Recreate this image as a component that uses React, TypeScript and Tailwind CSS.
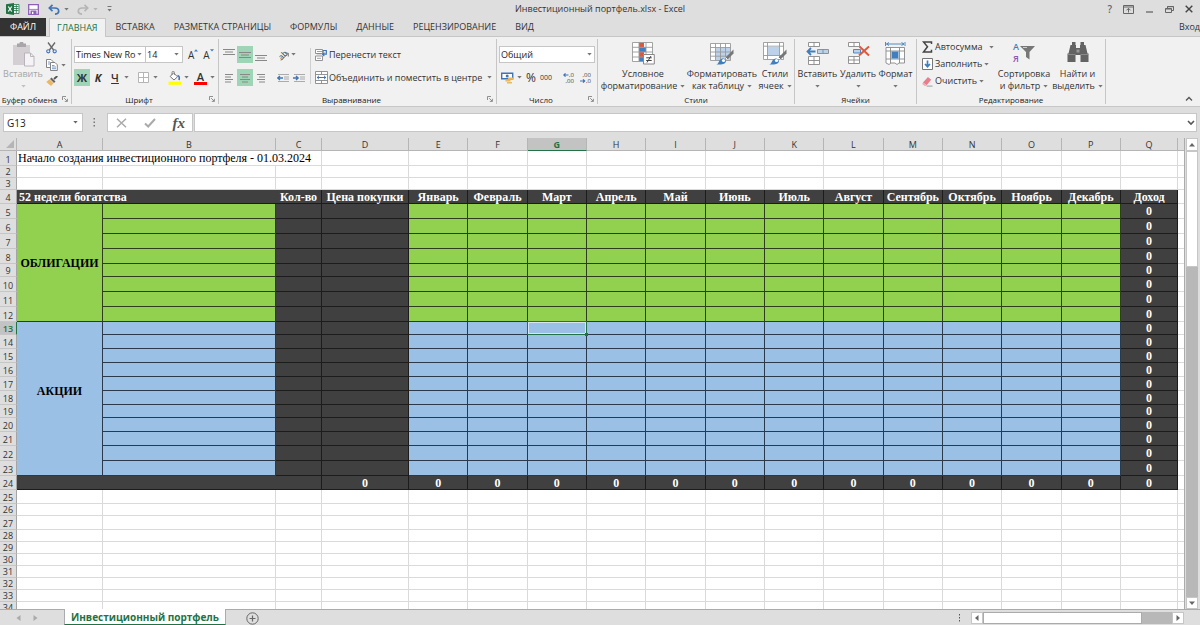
import React, { useState } from 'react';

const MONTHS = ['Январь', 'Февраль', 'Март', 'Апрель', 'Май', 'Июнь', 'Июль', 'Август', 'Сентябрь', 'Октябрь', 'Ноябрь', 'Декабрь'];
const COLUMNS = ['A', 'B', 'C', 'D', 'E', 'F', 'G', 'H', 'I', 'J', 'K', 'L', 'M', 'N', 'O', 'P', 'Q'];
const TABS = ['ВСТАВКА', 'РАЗМЕТКА СТРАНИЦЫ', 'ФОРМУЛЫ', 'ДАННЫЕ', 'РЕЦЕНЗИРОВАНИЕ', 'ВИД'];

const SHORT = 'h-3';
const MID = 'h-[13px]';
const TALL = 'h-[14px]';
const FULL = 'h-[15px]';

// heights of rows 1..34
const ROW_HEIGHTS = [
  FULL, SHORT, SHORT, TALL,
  FULL, FULL, FULL, FULL, MID, FULL, FULL, FULL,
  MID, TALL, TALL, TALL, TALL, TALL, MID, TALL, TALL, FULL, FULL,
  TALL, TALL, SHORT, TALL, SHORT, SHORT, SHORT, SHORT, SHORT, SHORT, SHORT,
];

type IconProps = { className?: string };

const Caret: React.FC<IconProps> = ({ className = 'text-[#777]' }) => (
  <svg width="5" height="3" viewBox="0 0 5 3" className={`shrink-0 ${className}`}><path d="M.3 0h4.4L2.5 2.6z" fill="currentColor" /></svg>
);

const Launcher = ({ label }: { label: string }) => (
  <button aria-label={label} className="absolute right-[3px] bottom-[2px]">
    <svg width="6" height="6" viewBox="0 0 6 6" fill="none" stroke="#777" strokeWidth="0.8"><path d="M.5 4V.5H4M2.2 2.2l3 3M5.4 2.8v2.6H2.8" /></svg>
  </button>
);

const Group = ({ title, className, launcher, children }: { title: string; className: string; launcher?: boolean; children: React.ReactNode }) => (
  <section className={`relative flex flex-col shrink-0 border-r border-[#c6c6c6] my-[2px] ${className}`}>
    <div className="flex-1 flex">{children}</div>
    <div className="h-[11px] text-[8px] leading-[13px] text-center text-[#222]">{title}</div>
    {launcher && <Launcher label={`Параметры: ${title}`} />}
  </section>
);

const Rule = () => <span className="w-px h-[14px] bg-[#cfcfcf] shrink-0" />;

const BigButton = ({ icon, lines, className, caretBelow }: { icon: React.ReactNode; lines: string[]; className: string; caretBelow?: boolean }) => (
  <button className={`flex flex-col items-center shrink-0 pt-[3px] whitespace-nowrap ${className}`}>
    <span className="h-[26px] flex items-start">{icon}</span>
    <span className="h-3 leading-3">{lines[0]}</span>
    {caretBelow ? (
      <span className="h-3 flex items-center"><Caret /></span>
    ) : (
      <span className="h-3 leading-3 flex items-center gap-[3px]">{lines[1]}<Caret /></span>
    )}
  </button>
);

const AlignLines = ({ rows, y = 3, label, active }: { rows: number[][]; y?: number; label: string; active?: boolean }) => (
  <button aria-label={label} className={`w-4 h-[17px] flex items-center justify-center shrink-0 ${active ? 'bg-[#9fd5b7]' : ''}`}>
    <svg width="12" height="16" viewBox="0 0 12 16" stroke="#888" strokeWidth="1">
      {rows.map(([from, to], i) => <path key={i} d={`M${from} ${y + i * 2.5}H${to}`} />)}
    </svg>
  </button>
);

const ExcelLogo = () => (
  <svg width="14" height="12" viewBox="0 0 14 12">
    <path d="M7 1.5h6v9H7z" fill="#fff" stroke="#217346" strokeWidth=".8" />
    <path d="M8 3.5h4.5M8 5.5h4.5M8 7.5h4.5M10.3 2v8" stroke="#217346" strokeWidth=".8" />
    <path d="M0 1.2 8 0v12L0 10.8z" fill="#217346" />
    <path d="m2.3 3.5 3.4 5M5.7 3.5l-3.4 5" stroke="#fff" strokeWidth="1.2" />
  </svg>
);

const SaveIcon = () => (
  <svg width="11" height="11" viewBox="0 0 11 11">
    <path d="M.7.7h9.6v9.6H.7z" fill="#fff" stroke="#8d5fb5" strokeWidth="1.3" />
    <path d="M2.5 6.5h6V10h-6z" fill="#8d5fb5" /><path d="M4 7.7h1.4V10H4z" fill="#fff" />
    <path d="M1 5.4h9" stroke="#8d5fb5" strokeWidth=".8" />
  </svg>
);

const UndoIcon = ({ className }: IconProps) => (
  <svg width="12" height="11" viewBox="0 0 12 11" fill="none" stroke="currentColor" strokeWidth="1.7" className={className}>
    <path d="M4.5.8 1.3 4l3.2 3.2M1.5 4h5.2c2.6 0 4 1.3 4 3.2S9 10 7 10.2" />
  </svg>
);

const PasteIcon = () => (
  <svg width="23" height="25" viewBox="0 0 23 25">
    <path d="M1 3h17v20H1z" fill="#d3cfd2" /><path d="M5 1.5h2.5a2 2 0 0 1 4 0H14V5H5z" fill="#a9a5a8" />
    <path d="M12.5 11h6l3.5 3.5V24h-9.5z" fill="#f6f3f7" stroke="#b9b4bc" /><path d="M18.5 11v3.5H22" fill="none" stroke="#b9b4bc" />
  </svg>
);

const ScissorsIcon = () => (
  <svg width="11" height="12" viewBox="0 0 11 12" fill="none">
    <path d="M2 .5 7.6 8M9 .5 3.4 8" stroke="#666" strokeWidth="1.3" />
    <circle cx="2.3" cy="9.3" r="1.6" stroke="#3f74b5" strokeWidth="1.1" /><circle cx="8.7" cy="9.3" r="1.6" stroke="#3f74b5" strokeWidth="1.1" />
  </svg>
);

const CopyIcon = () => (
  <svg width="12" height="12" viewBox="0 0 12 12" fill="#fff" stroke="#777" strokeWidth=".9">
    <path d="M.5.5H5l2 2v6H.5z" /><path d="M4.5 3.5H9l2.3 2.3v5.7H4.5z" />
    <path d="M2 3h2M2 5h2M6 6.5h2.5M6 8h4M6 9.7h4" stroke="#3f74b5" strokeWidth=".7" />
  </svg>
);

const BrushIcon = () => (
  <svg width="12" height="10" viewBox="0 0 12 10">
    <path d="M11.3 0 8 3" stroke="#555" strokeWidth="1.8" /><path d="m5.5 1.5 4 4L8 7 4 3z" fill="#666" />
    <path d="m3.5 3.3 4 4L5 10 .3 6z" fill="#eab765" />
  </svg>
);

const BordersIcon = () => (
  <svg width="11" height="11" viewBox="0 0 11 11" fill="#fff" stroke="#b5b5b5"><path d="M.5.5h10v10H.5zM5.5.5v10M.5 5.5h10" /></svg>
);

const FillIcon = () => (
  <svg width="13" height="14" viewBox="0 0 13 14">
    <path d="m5.5 1.8 4 4L6 9 2.2 5.5z" fill="#fff" stroke="#777" /><path d="M4 4V1.500a1.200 1.200 0 0 1 2.400 0V4" fill="none" stroke="#777" strokeWidth=".8" />
    <path d="M9.500 4.500c1.800.5 2.200 2 1.500 4.500" fill="none" stroke="#3f74b5" strokeWidth="1.600" />
    <path d="M.5 10.800H13v3H.5z" fill="#ffff00" />
  </svg>
);

const OrientationIcon = () => (
  <span className="relative w-3 h-3 flex items-center justify-center">
    <span className="text-[8px] leading-none -rotate-45">ab</span>
    <svg width="12" height="12" viewBox="0 0 12 12" className="absolute inset-0" fill="none" stroke="#777"><path d="m4 11.5 7-7M11.300 7.500V4.200H8" /></svg>
  </span>
);

const IndentIcon = ({ flip }: { flip?: boolean }) => (
  <svg width="12" height="10" viewBox="0 0 12 10" fill="none" stroke="#999">
    <path d="M1 1.500h11M7 4h5M7 6h5M1 8.500h11" strokeWidth=".8" />
    <path d={flip ? 'M0 5h5M3 3l2.200 2L3 7' : 'M6 5H.8M3 3 .8 5 3 7'} stroke="#3f74b5" strokeWidth="1.300" />
  </svg>
);

const WrapIcon = () => (
  <svg width="12" height="12" viewBox="0 0 12 12" fill="none" stroke="#888">
    <path d="M.5.5h7v4h-7zM.5 7h7v4.500h-7z" fill="#fff" strokeWidth=".9" /><path d="M2 2.500h7M2 9.300h4M2 4.800h4" strokeWidth=".8" />
    <path d="M8 1.500h3.300v3.700H7.500M9.300 3.500 7.500 5.200l1.800 1.800" stroke="#3f74b5" strokeWidth="1.200" />
  </svg>
);

const MergeIcon = () => (
  <svg width="13" height="13" viewBox="0 0 13 13" fill="#fff" stroke="#888">
    <path d="M.5.5h12v12H.5zM.5 3.500h12M.5 9.500h12M6.500.5v3M6.500 9.500v3" strokeWidth=".9" />
    <path d="M2 6.500h9M4 4.800 2.200 6.500 4 8.200M9 4.800l1.800 1.700L9 8.200" fill="none" stroke="#3f74b5" />
  </svg>
);

const MoneyIcon = () => (
  <svg width="13" height="12" viewBox="0 0 13 12">
    <path d="M.7 1.200h11v5.500H.7z" fill="#fff" stroke="#3f74b5" strokeWidth="1.400" /><circle cx="6.200" cy="4" r="1.500" fill="#3f74b5" />
    <path d="M7 5.500h5.500v2H7zM4.500 8h5v1.500h-5zM6 10h5v1.500H6z" fill="#eab765" />
  </svg>
);

const DecimalIcon = ({ grow }: { grow?: boolean }) => (
  <span className="relative block w-[11px] h-3 text-[6px] leading-[6px] text-[#444]">
    <span className="block text-right">{grow ? ',0' : ',00'}</span>
    <span className="block text-right">{grow ? ',00' : ',0'}</span>
    <svg width="11" height="12" viewBox="0 0 11 12" className="absolute inset-0" fill="none" stroke="#3f74b5" strokeWidth="1.200">
      <path d={grow ? 'M5.500 3H.8M2.500 1.300.8 3l1.700 1.700' : 'M0 9h4.600M3 7.300 4.700 9 3 10.700'} />
    </svg>
  </span>
);

const ConditionalIcon = () => (
  <svg width="23" height="23" viewBox="0 0 23 23">
    <path d="M.5.5h20v19H.5z" fill="#fff" /><path d="M7 .5h5v4.800H7zM7 10h5v5H7z" fill="#e0563a" /><path d="M7 5.300h7V10H7zM7 15h4v4.500H7z" fill="#3f7fc1" />
    <path d="M.5.5h20v19H.5zM7 .5v19M14 .5v19M.5 5.300h20M.5 10h20M.5 15h20" fill="none" stroke="#999" strokeWidth=".9" />
    <path d="M11.500 12.500h10.800V22H11.500z" fill="#fff" stroke="#888" /><path d="M14.200 15.800h5.500M14.200 18.500h5.500M19 14l-4 6.500" stroke="#444" />
  </svg>
);

const BrushOverlay = () => (
  <>
    <path d="M23.500 7.500v4l-6 6-2-2z" fill="#777" /><path d="m15.500 15.500 2 2" stroke="#fff" />
    <path d="M6 22.500c3 0 2.500-5.500 6.500-6 2 0 4 1.500 3.300 3.500-.8 2.300-5 2.800-9.800 2.500z" fill="#3f7fc1" />
    <circle cx="13.500" cy="18.500" r="1.600" fill="#fff" />
  </>
);

const TableStyleIcon = () => (
  <svg width="25" height="24" viewBox="0 0 25 24">
    <path d="M.5 1.500h20v17H.5z" fill="#fff" /><path d="M6 6h14.500v12.500H6z" fill="#bcd1ea" />
    <path d="M.5 1.500h20v17H.5zM5.500 1.500v17M10.500 1.500v17M15.500 1.500v17M.5 5.500h20M.5 10h20M.5 14.200h20" fill="none" stroke="#999" strokeWidth=".9" />
    <BrushOverlay />
  </svg>
);

const CellStyleIcon = () => (
  <svg width="25" height="24" viewBox="0 0 25 24">
    <path d="M.5.5h20v17H.5z" fill="#fff" /><path d="M.5.5h20v17H.5zM4.500.5v17M16.500.5v17M.5 4.200h20M.5 13.500h20" fill="none" stroke="#999" strokeWidth=".9" />
    <path d="M5 4.700h11V13H5z" fill="#bcd1ea" /><BrushOverlay />
  </svg>
);

const InsertCellsIcon = () => (
  <svg width="23" height="23" viewBox="0 0 23 23" fill="#fff" stroke="#888" strokeWidth=".9">
    <path d="M2.500.5h11v4h-11zM8 .5v4M2.500 14.500h11v8h-11zM8 14.500v8M2.500 18.500h11" />
    <path d="M11.500 7.500h11v4h-11zM17 7.500v4" fill="#bcd1ea" /><path d="M9.500 9.500h-8M5 6 1.500 9.500 5 13" fill="none" stroke="#3f7fc1" strokeWidth="1.800" />
  </svg>
);

const DeleteCellsIcon = () => (
  <svg width="23" height="23" viewBox="0 0 23 23" fill="#fff" stroke="#888" strokeWidth=".9">
    <path d="M1.500.5h11v4h-11zM7 .5v4M1.500 14.500h11v7h-11zM7 14.500v7M1.500 18h11" /><path d="M6.500 7.500h7V11h-7z" fill="#bcd1ea" stroke="#3f7fc1" />
    <path d="m12.500 4.500 9.500 9M22 4.500l-10 9" stroke="#e0563a" strokeWidth="1.900" />
  </svg>
);

const FormatCellsIcon = () => (
  <svg width="21" height="24" viewBox="0 0 21 24" fill="#fff" stroke="#888" strokeWidth=".9">
    <path d="M1 5.500h18.500V21H14l-2 1.500L10 21H6l-2 1.500L1 21zM5.500 5.500V21M14.500 5.500V21M1 9h18.500M1 17h18.500" /><path d="M6.500 9.500h7v7h-7z" fill="#3f7fc1" stroke="none" />
    <path d="M.5 0v4M20 0v4M1.500 2H19M4 .5 1.500 2 4 3.500M16.500.5 19 2l-2.500 1.500" fill="none" stroke="#3f7fc1" />
  </svg>
);

const SigmaIcon = () => (
  <svg width="11" height="12" viewBox="0 0 11 12" fill="none" stroke="#444" strokeWidth="1.500"><path d="M9.500 3V1h-8l4 4.800L1.500 11h8V8.800" /></svg>
);

const FillDownIcon = () => (
  <svg width="11" height="12" viewBox="0 0 11 12" fill="#fff" stroke="#777"><path d="M.5.5h10v11H.5z" /><path d="M5.500 2.500v6M3 6l2.500 2.700L8 6" fill="none" stroke="#3f7fc1" strokeWidth="1.700" /></svg>
);

const EraserIcon = () => (
  <svg width="11" height="11" viewBox="0 0 12 11"><path d="m6.500.5 3.500 3-5 6-4-3z" fill="#e97d8d" /><path d="m1 6.500 4 3-.8 1H2.800L.3 8.200z" fill="#f2abb5" /><path d="M5 10.500h6.500" stroke="#888" strokeWidth=".9" /></svg>
);

const SortFilterIcon = () => (
  <span className="flex items-center h-[22px]">
    <span className="flex flex-col text-[9px] leading-[12px] font-semibold"><span className="text-[#3f7fc1]">А</span><span className="text-[#8a5ab0]">Я</span></span>
    <svg width="15" height="14" viewBox="0 0 15 14" className="ml-px"><path d="M0 0h15L9.500 6v7.500L6 11V6z" fill="#777" /><path d="M3 1.500h4" stroke="#ccc" /></svg>
  </span>
);

const BinocularsIcon = () => (
  <svg width="22" height="20" viewBox="0 0 22 20" fill="#636363">
    <path d="M5 0h3.500v3H5zM13.500 0H17v3h-3.500zM3.500 3H9v3h4V3h5.500l2 8.500h1V20h-8v-7h-5v7h-8v-8.500h1z" />
    <path d="M9.500 7.500h3v3h-3z" fill="#999" /><path d="M.5 12.500h8M13.500 12.500h8" stroke="#999" strokeWidth=".7" />
  </svg>
);

const TitleBar = () => (
  <header className="flex h-[18px] items-center px-[6px]">
    <div className="flex-1 flex items-center">
      <ExcelLogo />
      <button aria-label="Сохранить" className="ml-2"><SaveIcon /></button>
      <button aria-label="Отменить" className="ml-[9px] text-[#3f74b5]"><UndoIcon /></button>
      <Caret className="text-[#777] ml-1" />
      <button aria-label="Повторить" className="ml-2 text-[#b5b5b5]"><UndoIcon className="-scale-x-100" /></button>
      <Caret className="text-[#b5b5b5] ml-1" />
      <button aria-label="Настройка панели" className="ml-[9px]">
        <svg width="5" height="6" viewBox="0 0 5 6" fill="#777"><path d="M.5 0h4v1h-4zM.5 3h4l-2 2.500z" /></svg>
      </button>
    </div>
    <h1>Инвестиционный портфель.xlsx - Excel</h1>
    <div className="flex-1 flex items-center justify-end gap-[11px] text-[#666]">
      <button aria-label="Справка" className="text-[10px] font-semibold">?</button>
      <button aria-label="Параметры ленты">
        <svg width="11" height="9" viewBox="0 0 11 9" fill="none" stroke="currentColor"><path d="M.5.5h10v8H.5zM.5 2h10M5.500 7.500v-4M3.500 5.300l2-2 2 2" /></svg>
      </button>
      <button aria-label="Свернуть"><svg width="9" height="9" viewBox="0 0 9 9"><path d="M1 7h7" stroke="currentColor" strokeWidth="1.300" /></svg></button>
      <button aria-label="Восстановить">
        <svg width="9" height="9" viewBox="0 0 9 9" fill="none" stroke="currentColor"><path d="M.5 3.500h6v4h-6zM.5 4h6M2.500 3.500v-2h6v4h-2M2.500 1.700h6" /></svg>
      </button>
      <button aria-label="Закрыть" className="mr-[1px]"><svg width="8" height="8" viewBox="0 0 8 8"><path d="m.7.7 6.600 6.600M7.300.7.7 7.300" stroke="#444" strokeWidth="1.400" /></svg></button>
    </div>
  </header>
);

const TabRow = () => (
  <nav className="flex h-[19px] items-stretch border-b border-[#c6c6c6] whitespace-nowrap">
    <button className="w-[46px] bg-[#333] text-white">ФАЙЛ</button>
    <button className="ml-[3px] mr-px -mb-px px-[7px] border border-b-0 border-[#c6c6c6] bg-[#f1f1f1] text-[#217346]">ГЛАВНАЯ</button>
    {TABS.map((tab) => <button key={tab} className="px-[9px] mr-px">{tab}</button>)}
    <a href="#login" className="ml-auto flex items-center">Вход</a>
  </nav>
);

const FontGroup = () => (
  <div className="flex flex-col gap-[6px] pl-[2px] pt-[7px]">
    <div className="flex items-center">
      <div className="relative w-[72px] h-[17px]">
        <select aria-label="Шрифт" className="appearance-none w-full h-full border border-[#c6c6c6] bg-white pl-[1px] text-[#222]"><option>Times New Ro</option></select>
        <Caret className="absolute right-1 top-[7px] text-[#777] pointer-events-none" />
      </div>
      <div className="relative w-[38px] h-[17px] -ml-px">
        <select aria-label="Размер шрифта" className="appearance-none w-full h-full border border-[#c6c6c6] bg-white pl-[1px] text-[#222]"><option>14</option></select>
        <Caret className="absolute right-1 top-[7px] text-[#777] pointer-events-none" />
      </div>
      <button aria-label="Увеличить размер шрифта" className="ml-[5px] flex items-start text-[10px] leading-3">A<svg width="4" height="3" viewBox="0 0 4 3"><path d="M0 2.500 2 .3l2 2.200z" fill="#3f7fc1" /></svg></button>
      <button aria-label="Уменьшить размер шрифта" className="ml-[5px] flex items-start text-[10px] leading-3">A<svg width="4" height="3" viewBox="0 0 4 3"><path d="M0 .3 2 2.500 4 .3z" fill="#3f7fc1" /></svg></button>
    </div>
    <div className="flex items-center h-[17px]">
      <button className="w-4 h-[17px] bg-[#9fd5b7] text-[11px] font-bold">Ж</button>
      <button className="w-4 text-[11px] font-bold italic">К</button>
      <button className="w-[18px] text-[11px] font-semibold underline">Ч</button>
      <Caret />
      <span className="ml-[5px]"><Rule /></span>
      <button aria-label="Границы" className="ml-1"><BordersIcon /></button>
      <Caret className="ml-1 text-[#777]" />
      <span className="ml-[5px]"><Rule /></span>
      <button aria-label="Цвет заливки" className="ml-[5px]"><FillIcon /></button>
      <Caret className="ml-[3px] text-[#777]" />
      <button aria-label="Цвет текста" className="ml-[5px] w-[13px] border-b-[3px] border-[#ff0000] text-[11px] leading-[11px] font-semibold">A</button>
      <Caret className="ml-[3px] text-[#777]" />
    </div>
  </div>
);

const AlignmentGroup = () => (
  <div className="flex pl-[2px] pt-[7px]">
    <div className="flex flex-col gap-[6px] w-[89px]">
      <div className="flex items-center h-[17px]">
        <AlignLines label="По верхнему краю" y={2.5} rows={[[0, 12], [2, 10], [0, 12]]} />
        <AlignLines label="По середине" active y={5.5} rows={[[0, 12], [2, 10], [0, 12]]} />
        <AlignLines label="По нижнему краю" y={8.5} rows={[[0, 12], [2, 10], [0, 12]]} />
        <span className="ml-[3px]"><Rule /></span>
        <button aria-label="Ориентация" className="ml-[5px] text-[#444]"><OrientationIcon /></button>
        <Caret className="ml-[2px] text-[#777]" />
      </div>
      <div className="flex items-center h-[17px]">
        <AlignLines label="По левому краю" y={4.5} rows={[[2, 10], [2, 8], [2, 10], [2, 8]]} />
        <AlignLines label="По центру" active y={4.5} rows={[[1, 11], [3, 9], [1, 11], [3, 9]]} />
        <AlignLines label="По правому краю" y={4.5} rows={[[2, 10], [4, 10], [2, 10], [4, 10]]} />
        <span className="ml-[3px]"><Rule /></span>
        <button aria-label="Уменьшить отступ" className="ml-[5px]"><IndentIcon /></button>
        <button aria-label="Увеличить отступ" className="ml-1"><IndentIcon flip /></button>
      </div>
    </div>
    <span className="w-px h-9 mt-[2px] bg-[#cfcfcf]" />
    <div className="flex flex-col gap-[6px] pl-1">
      <button className="flex items-center h-[17px] gap-[2px]"><WrapIcon />Перенести текст</button>
      <button className="flex items-center h-[17px] gap-[1px] whitespace-nowrap"><MergeIcon />Объединить и поместить в центре<Caret className="ml-1 text-[#777]" /></button>
    </div>
  </div>
);

const NumberGroup = () => (
  <div className="flex-1 flex flex-col gap-[6px] px-[2px] pt-[7px]">
    <div className="relative h-[17px]">
      <select aria-label="Числовой формат" className="appearance-none w-full h-full border border-[#c6c6c6] bg-white pl-[1px] text-[#222]"><option>Общий</option></select>
      <Caret className="absolute right-[3px] top-[7px] text-[#777] pointer-events-none" />
    </div>
    <div className="flex items-center h-[17px] pl-[2px]">
      <button aria-label="Финансовый формат"><MoneyIcon /></button>
      <Caret className="ml-[3px] text-[#777]" />
      <button className="ml-1 text-[12px]">%</button>
      <button className="ml-1 text-[7px]">000</button>
      <span className="ml-[5px]"><Rule /></span>
      <button aria-label="Увеличить разрядность" className="ml-[6px]"><DecimalIcon grow /></button>
      <button aria-label="Уменьшить разрядность" className="ml-[6px]"><DecimalIcon /></button>
    </div>
  </div>
);

const Ribbon = () => (
  <div className="relative flex h-[70px] bg-[#f1f1f1] border-b border-[#c6c6c6] text-[#333]">
    <Group title="Буфер обмена" className="w-[72px] pr-3 whitespace-nowrap" launcher>
      <button className="w-[43px] shrink-0 pl-[3px] flex flex-col items-center pt-[3px] text-[#a5a5a5]">
        <span className="h-[26px]"><PasteIcon /></span>
        <span className="h-3 leading-3">Вставить</span>
        <span className="h-3 flex items-center"><Caret className="text-[#c0c0c0]" /></span>
      </button>
      <div className="flex flex-col items-start pt-[3px] pl-[3px] gap-[5px]">
        <button aria-label="Вырезать"><ScissorsIcon /></button>
        <div className="flex items-center gap-[3px]"><button aria-label="Копировать"><CopyIcon /></button><Caret /></div>
        <button aria-label="Формат по образцу"><BrushIcon /></button>
      </div>
    </Group>
    <Group title="Шрифт" className="w-[147px] pr-3" launcher><FontGroup /></Group>
    <Group title="Выравнивание" className="w-[278px] pr-3" launcher><AlignmentGroup /></Group>
    <Group title="Число" className="w-[101px] pr-3" launcher>
      <div className="flex flex-1 -mr-3"><NumberGroup /></div>
    </Group>
    <Group title="Стили" className="w-[197px]">
      <BigButton className="w-[90px]" icon={<ConditionalIcon />} lines={['Условное', 'форматирование']} />
      <BigButton className="w-[68px]" icon={<TableStyleIcon />} lines={['Форматировать', 'как таблицу']} />
      <BigButton className="w-[38px]" icon={<CellStyleIcon />} lines={['Стили', 'ячеек']} />
    </Group>
    <Group title="Ячейки" className="w-[122px]">
      <BigButton className="w-[45px]" icon={<InsertCellsIcon />} lines={['Вставить']} caretBelow />
      <BigButton className="w-[36px]" icon={<DeleteCellsIcon />} lines={['Удалить']} caretBelow />
      <BigButton className="w-[39px]" icon={<FormatCellsIcon />} lines={['Формат']} caretBelow />
    </Group>
    <Group title="Редактирование" className="w-[189px]">
      <div className="w-20 shrink-0 flex flex-col pl-[5px] pt-[2px] gap-[5px] whitespace-nowrap">
        <button className="flex items-center gap-[2px] h-3 leading-3"><SigmaIcon />Автосумма<Caret className="ml-1 text-[#777]" /></button>
        <button className="flex items-center gap-[2px] h-3 leading-3"><FillDownIcon />Заполнить<Caret /></button>
        <button className="flex items-center gap-[2px] h-3 leading-3"><EraserIcon />Очистить<Caret /></button>
      </div>
      <BigButton className="w-[54px]" icon={<SortFilterIcon />} lines={['Сортировка', 'и фильтр']} />
      <BigButton className="w-[53px]" icon={<BinocularsIcon />} lines={['Найти и', 'выделить']} />
    </Group>
    <button aria-label="Свернуть ленту" className="self-end ml-auto mr-[7px] mb-1">
      <svg width="8" height="6" viewBox="0 0 8 6" fill="none" stroke="#555" strokeWidth="1.300"><path d="m1 4.500 3-3 3 3" /></svg>
    </button>
  </div>
);

const FormulaBar = () => {
  const [formula, setFormula] = useState('');
  return (
    <div className="flex h-[31px] items-center px-[3px]">
      <div className="relative w-20 h-[19px]">
        <input aria-label="Имя ячейки" defaultValue="G13" className="w-full h-full border border-[#c6c6c6] bg-white pl-[3px] text-[10px] text-[#222] outline-none" />
        <Caret className="absolute right-[5px] top-2 text-[#666]" />
      </div>
      <svg width="24" height="9" viewBox="0 0 24 9" fill="#777"><path d="M10.500 0H12v1.500h-1.500zM10.500 3.500H12V5h-1.500zM10.500 7H12v1.500h-1.500z" /></svg>
      <div className="w-[86px] h-[19px] flex items-center justify-between pl-2 pr-[7px] border border-[#c6c6c6] bg-white">
        <button aria-label="Отмена"><svg width="11" height="10" viewBox="0 0 11 10"><path d="m1 .7 9 8.600M10 .7 1 9.300" stroke="#aaa" strokeWidth="1.500" /></svg></button>
        <button aria-label="Ввод"><svg width="12" height="10" viewBox="0 0 12 10"><path d="m1 5.500 3.200 3L11 1" fill="none" stroke="#aaa" strokeWidth="2" /></svg></button>
        <button className="font-['Liberation_Serif',serif] text-[15px] font-bold italic leading-4 text-[#555]">fx</button>
      </div>
      <div className="relative flex-1 h-[19px] ml-px">
        <input aria-label="Строка формул" value={formula} onChange={(e) => setFormula(e.target.value)} className="w-full h-full border border-[#c6c6c6] bg-white pl-1 outline-none" />
        <svg width="8" height="6" viewBox="0 0 8 6" fill="none" stroke="#555" strokeWidth="1.600" className="absolute right-[2px] top-[7px]"><path d="m1 1 3 3 3-3" /></svg>
      </div>
    </div>
  );
};

const GRID = 'border-r border-b border-[#dadada] bg-white';
const DARK = 'border-r border-b border-[#1c1c1c] bg-[#404040] text-white text-center font-bold pt-px';
const GREEN = 'border-r border-b border-[#2e3d20] bg-[#92d050]';
const BLUE = 'border-r border-b border-[#2b3a4a] bg-[#9bc0e6]';

const RowCells = ({ row }: { row: number }) => {
  if (row === 1) {
    return (
      <>
        <td colSpan={3} className={`${GRID} pl-[1px] whitespace-nowrap`}>Начало создания инвестиционного портфеля - 01.03.2024</td>
        {COLUMNS.slice(3).map((c) => <td key={c} className={GRID} />)}
      </>
    );
  }
  if (row === 4) {
    return (
      <>
        <td colSpan={2} className="border-b border-[#1c1c1c] bg-[#404040] text-white font-bold pl-[2px] pt-px">52 недели богатства</td>
        {['Кол-во', 'Цена покупки', ...MONTHS, 'Доход'].map((h) => <td key={h} className={`${DARK} whitespace-nowrap`}>{h}</td>)}
      </>
    );
  }
  if (row >= 5 && row <= 23) {
    const fill = row <= 12 ? GREEN : BLUE;
    return (
      <>
        {row === 5 && <td rowSpan={8} className={`${fill} text-center font-bold pt-px`}>ОБЛИГАЦИИ</td>}
        {row === 13 && <td rowSpan={11} className={`${fill} text-center font-bold pb-[14px]`}>АКЦИИ</td>}
        <td className={fill} />
        <td className={DARK} />
        <td className={DARK} />
        {MONTHS.map((m, i) => (
          <td key={m} className={row === 13 && i === 2 ? `${fill} relative` : fill}>
            {row === 13 && i === 2 && (
              <div className="absolute -inset-px border border-[#217346] shadow-[inset_0_0_0_1px_#d5e5f3]">
                <span className="absolute -right-[2px] -bottom-[2px] w-[3px] h-[3px] bg-[#217346]" />
              </div>
            )}
          </td>
        ))}
        <td className={DARK}>0</td>
      </>
    );
  }
  if (row === 24) {
    return (
      <>
        <td colSpan={3} className={DARK} />
        {COLUMNS.slice(3).map((c) => <td key={c} className={DARK}>0</td>)}
      </>
    );
  }
  return <>{COLUMNS.map((c) => <td key={c} className={GRID} />)}</>;
};

const Sheet = () => (
  <table className="w-full table-fixed border-separate border-spacing-0 text-black font-['Liberation_Serif',serif] text-[12px] leading-[11px]">
    <colgroup>
      <col className="w-[17px]" />
      <col className="w-[86px]" />
      <col className="w-[173px]" />
      <col className="w-[46px]" />
      <col className="w-[87px]" />
      {MONTHS.map((m) => <col key={m} />)}
      <col className="w-[57px]" />
      <col className="w-[6px]" />
    </colgroup>
    <thead className="font-['Open_Sans',sans-serif] text-[9px] text-[#333]">
      <tr className="h-[13px]">
        <th aria-label="Выделить всё" className="border-r border-b border-[#b5b5b5]">
          <svg width="8" height="8" viewBox="0 0 8 8" className="ml-auto mr-[2px]"><path d="M8 0v8H0z" fill="#b5b5b5" /></svg>
        </th>
        {COLUMNS.map((c) => (
          <th key={c} className={c === 'G' ? 'border-r border-b border-r-[#b5b5b5] border-b-[#217346] bg-[#c3c3c3] text-[#217346] font-bold' : 'border-r border-b border-[#b5b5b5] font-normal'}>{c}</th>
        ))}
        <th className="border-b border-[#b5b5b5]" />
      </tr>
    </thead>
    <tbody>
      {ROW_HEIGHTS.map((height, i) => (
        <tr key={i} className={height}>
          <th className={`border-r border-b font-['Open_Sans',sans-serif] text-[9px] leading-[11px] align-bottom ${i === 12 ? 'border-b-[#c6c6c6] border-r-[#217346] bg-[#c3c3c3] text-[#217346] font-semibold' : 'border-b-[#c6c6c6] border-r-[#a5a5a5] text-[#333] font-normal'}`}>{i + 1}</th>
          <RowCells row={i + 1} />
          <td className="border-b border-[#dadada] bg-white" />
        </tr>
      ))}
    </tbody>
  </table>
);

const ScrollButton = ({ label, d, className }: { label: string; d: string; className: string }) => (
  <button aria-label={label} className={`shrink-0 flex items-center justify-center bg-white border border-[#c6c6c6] ${className}`}>
    <svg width="6" height="6" viewBox="0 0 6 6"><path d={d} fill="#666" /></svg>
  </button>
);

const SheetBar = () => (
  <footer className="flex h-4 shrink-0 items-stretch border-t border-[#ababab]">
    <div className="w-16 flex items-center gap-3 pl-4">
      <button aria-label="Предыдущий лист"><svg width="5" height="6" viewBox="0 0 5 6"><path d="M4.500 0v6l-4-3z" fill="#aaa" /></svg></button>
      <button aria-label="Следующий лист"><svg width="5" height="6" viewBox="0 0 5 6"><path d="M.5 0v6l4-3z" fill="#aaa" /></svg></button>
    </div>
    <button className="-mt-px px-[6px] bg-white border-x border-x-[#ababab] border-b border-b-[#217346] text-[10px] leading-[14px] font-bold text-[#217346] whitespace-nowrap">Инвестиционный портфель</button>
    <button aria-label="Новый лист" className="ml-5 mt-[2px]">
      <svg width="13" height="13" viewBox="0 0 13 13" fill="none" stroke="#666"><circle cx="6.500" cy="6.500" r="5.700" /><path d="M6.500 3.500v6M3.500 6.500h6" strokeWidth="1.200" /></svg>
    </button>
    <div className="ml-auto mr-4 flex items-center">
      <svg width="3" height="8" viewBox="0 0 3 8" className="mr-[10px]" fill="#555"><path d="M1 0h1v1.500H1zM1 3h1v1.500H1zM1 6h1v1.500H1z" /></svg>
      <ScrollButton label="Влево" d="M4.500 0v6L1 3z" className="w-3 h-3" />
      <div className="flex w-[189px] h-3 bg-[#b8b8b8]"><div className="w-[159px] bg-white border border-[#ababab]" /></div>
      <ScrollButton label="Вправо" d="M1.500 0v6L5 3z" className="w-3 h-3" />
    </div>
  </footer>
);

const App: React.FC = () => (
  <div className="h-screen flex flex-col overflow-hidden bg-[#dedede] font-['Open_Sans',sans-serif] text-[9px] leading-3 text-[#333]">
    <TitleBar />
    <TabRow />
    <Ribbon />
    <FormulaBar />
    <main className="flex-1 min-h-0 flex">
      <div className="flex-1 overflow-hidden border-r border-[#ababab]"><Sheet /></div>
      <div className="w-[15px] pl-[1px] pr-[2px] flex flex-col">
        <ScrollButton label="Вверх" d="M0 4.500h6L3 1z" className="h-[13px]" />
        <div className="flex-1 bg-[#b8b8b8]"><div className="h-[26%] bg-white border border-[#c6c6c6]" /></div>
        <ScrollButton label="Вниз" d="M0 1.500h6L3 5z" className="h-3" />
      </div>
    </main>
    <SheetBar />
  </div>
);

export default App;
